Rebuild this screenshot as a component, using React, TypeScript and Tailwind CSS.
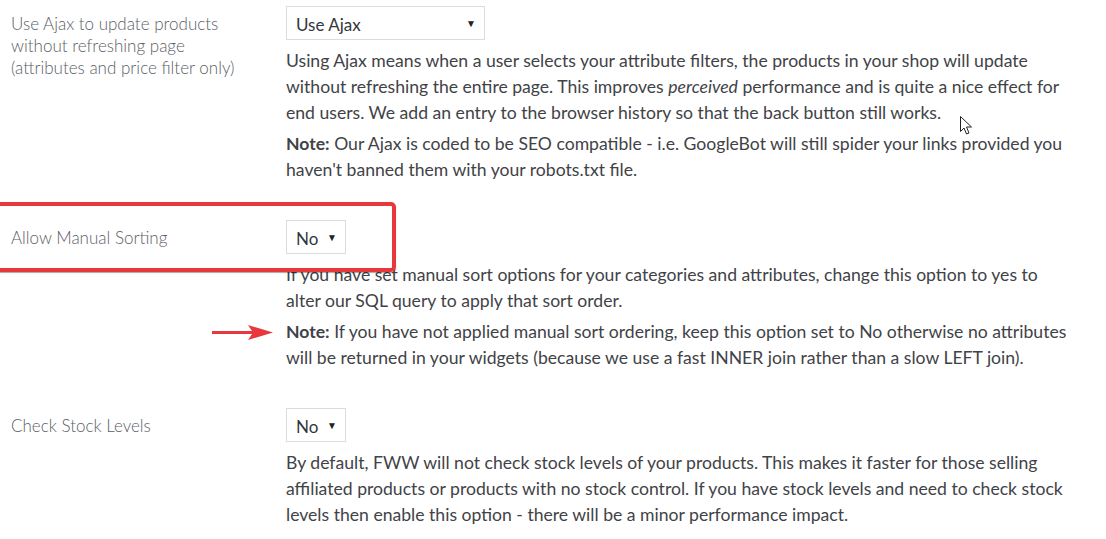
import React from 'react';

const font = { fontFamily: 'Lato, "Noto Sans", sans-serif' };

function FakeSelect({ value, width }: { value: string; width: string }) {
    return (
        <div className={`${width} h-[34px] border border-[#dcdcdc] bg-white flex items-center justify-between pl-[9px] pr-[8px] pt-[3px] text-[17px] text-[#32373c]`}>
            <span>{value}</span>
            <span className="text-[10px] text-[#222] -mt-[3px]">▼</span>
        </div>
    );
}

function Lines({ lines }: { lines: React.ReactNode[] }) {
    return (
        <p>
            {lines.map((l, i) => (
                <span key={i} className="block whitespace-nowrap">{l}</span>
            ))}
        </p>
    );
}

function SettingRow({ label, select, children }: { label: React.ReactNode; select: React.ReactNode; children: React.ReactNode }) {
    return (
        <div className="flex pl-[11px]">
            <div className="w-[275px] shrink-0 pt-[7px] text-[17px] leading-[22px] text-[#5b6066] font-light">{label}</div>
            <div className="flex-1">
                {select}
                <div className="mt-[8px] text-[17.6px] leading-[26px] text-[#3f4347] flex flex-col gap-[5px]">{children}</div>
            </div>
        </div>
    );
}

export default function App() {
    return (
        <div className="relative w-[1106px] h-[539px] bg-white overflow-hidden" style={font}>
            <div className="flex flex-col gap-[37px] pt-[6px]">
                <SettingRow
                    label={<>Use Ajax to update products<br />without refreshing page<br />(attributes and price filter only)</>}
                    select={<FakeSelect value="Use Ajax" width="w-[199px]" />}
                >
                    <Lines lines={[
                        'Using Ajax means when a user selects your attribute filters, the products in your shop will update',
                        <>without refreshing the entire page. This improves <em>perceived</em> performance and is quite a nice effect for</>,
                        'end users. We add an entry to the browser history so that the back button still works.',
                    ]} />
                    <Lines lines={[
                        <><strong className="font-bold">Note:</strong> Our Ajax is coded to be SEO compatible - i.e. GoogleBot will still spider your links provided you</>,
                        "haven't banned them with your robots.txt file.",
                    ]} />
                </SettingRow>

                <SettingRow label="Allow Manual Sorting" select={<FakeSelect value="No" width="w-[60px]" />}>
                    <Lines lines={[
                        'If you have set manual sort options for your categories and attributes, change this option to yes to',
                        'alter our SQL query to apply that sort order.',
                    ]} />
                    <Lines lines={[
                        <><strong className="font-bold">Note:</strong> If you have not applied manual sort ordering, keep this option set to No otherwise no attributes</>,
                        'will be returned in your widgets (because we use a fast INNER join rather than a slow LEFT join).',
                    ]} />
                </SettingRow>

                <SettingRow label="Check Stock Levels" select={<FakeSelect value="No" width="w-[60px]" />}>
                    <Lines lines={[
                        'By default, FWW will not check stock levels of your products. This makes it faster for those selling',
                        'affiliated products or products with no stock control. If you have stock levels and need to check stock',
                        'levels then enable this option - there will be a minor performance impact.',
                    ]} />
                </SettingRow>
            </div>

            {/* highlight box */}
            <div className="absolute left-[-12px] top-[202px] w-[408px] h-[70px] border-4 border-[#e8383d] rounded-[5px] shadow-[0_1px_1px_rgba(0,0,0,0.35)]"></div>

            {/* arrow */}
            <svg className="absolute left-[212px] top-[324px]" width="62" height="17" viewBox="0 0 62 17">
                <rect x="0" y="7" width="42" height="3" fill="#e8383d" />
                <polygon points="36,1 61,8.5 36,16 41,8.5" fill="#e8383d" />
            </svg>

            {/* mouse cursor */}
            <svg className="absolute left-[960px] top-[116px]" width="14" height="20" viewBox="0 0 14 20">
                <path d="M0.5 0.5 L0.5 15.5 L4 12 L6.5 18 L9 17 L6.5 11 L11.5 11 Z" fill="#fff" stroke="#222" strokeWidth="1" strokeLinejoin="round" />
            </svg>
        </div>
    );
}
